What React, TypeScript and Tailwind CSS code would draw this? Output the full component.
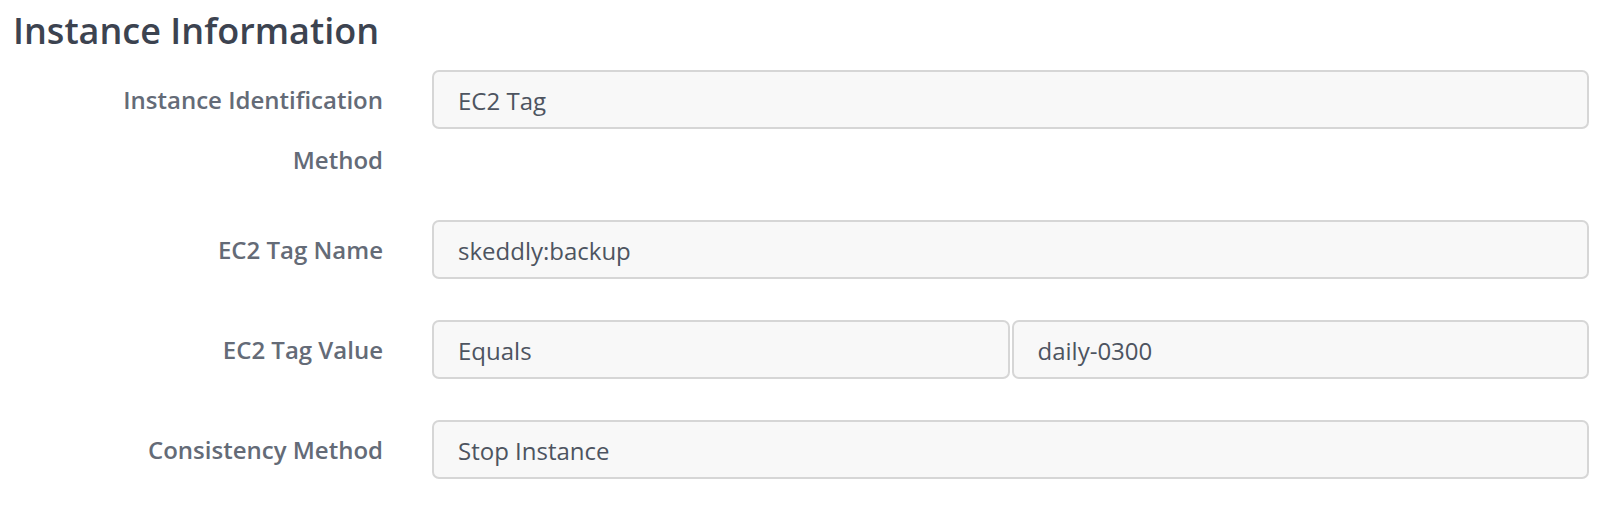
import React from 'react'

type Field = {
  label: string
  values: string[]
  gapAfter: string
}

const fields: Field[] = [
  { label: 'Instance Identification Method', values: ['EC2 Tag'], gapAfter: 'mb-[30px]' },
  { label: 'EC2 Tag Name', values: ['skeddly:backup'], gapAfter: 'mb-[40px]' },
  { label: 'EC2 Tag Value', values: ['Equals', 'daily-0300'], gapAfter: 'mb-[40px]' },
  { label: 'Consistency Method', values: ['Stop Instance'], gapAfter: 'mb-0' },
]

function ValueBox({ value }: { value: string }) {
  return (
    <div className="flex-1 h-[59px] flex items-center pt-[3px] px-[24px] bg-[#f8f8f8] border-2 border-[#d6d6d6] rounded-[7px] text-[24px] text-[#4d5460]">
      {value}
    </div>
  )
}

export default function App() {
  return (
    <div
      className="w-[1623px] h-[506px] bg-white overflow-hidden"
      style={{ fontFamily: '"Open Sans", "Liberation Sans", sans-serif' }}
    >
      {/* heading */}
      <h2 className="pt-[9px] pl-[13px] text-[36px] leading-[1.2] font-semibold text-[#3c4350]">
        Instance Information
      </h2>

      {/* form rows */}
      <div className="mt-[18px] pr-[34px]">
        {fields.map((field) => (
          <div key={field.label} className={`flex items-start ${field.gapAfter}`}>
            <label className="ml-[81px] w-[302px] shrink-0 text-right text-[24px] leading-[60px] font-semibold text-[#646b77]">
              {field.label}
            </label>
            <div className="ml-[49px] flex-1 flex gap-[2px]">
              {field.values.map((v) => (
                <ValueBox key={v} value={v} />
              ))}
            </div>
          </div>
        ))}
      </div>
    </div>
  )
}
